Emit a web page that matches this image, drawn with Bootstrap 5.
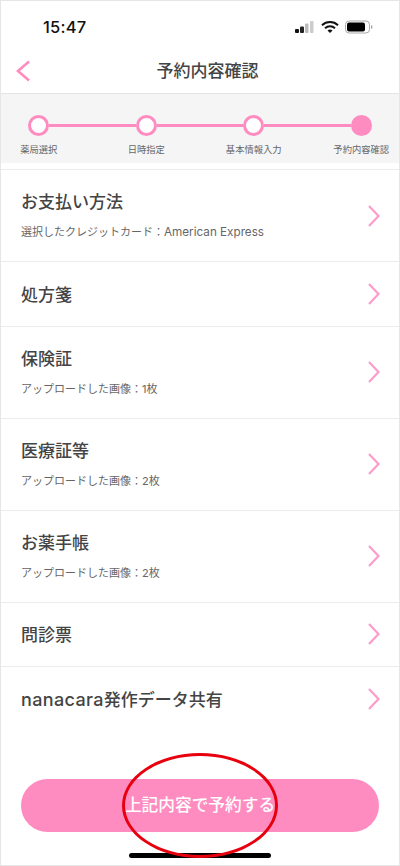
<!DOCTYPE html>
<html lang="ja">
<head>
<meta charset="utf-8">
<meta name="viewport" content="width=device-width, initial-scale=1">
<link href="https://cdn.jsdelivr.net/npm/bootstrap@5.3.0/dist/css/bootstrap.min.css" rel="stylesheet">
<style>
html,body{margin:0;background:#fff}
body{font-family:"Inter","Noto Sans CJK JP",sans-serif;color:#444}
.screen{width:400px;height:866px;border:1px solid #e6e6e6;overflow:hidden;position:relative}
.statusbar{height:49px;padding:0 0 0 42px}
.clock{font-family:"Inter",sans-serif;font-size:16.5px;font-weight:500;color:#111;letter-spacing:.2px;padding-top:16px;line-height:20px}
.status-icons{margin-left:auto;padding:19px 0 0 0;margin-right:26px;gap:6px}
.topbar{height:44px;border-bottom:1px solid #e3e3e3;position:relative}
.topbar-title{font-size:17px;font-weight:500;color:#444;line-height:24px;margin-top:-2px;margin-left:15px}
.back{position:absolute;left:15px;top:10px}
.stepper{height:69px;background:#f5f5f5;padding-top:21px;overflow:hidden}
.dots{padding:0 27px}
.dot{width:21px;height:21px;border-radius:50%;border:3px solid #ff8cc0;background:#fff;flex:none}
.dot-on{background:#ff8cc0}
.link{height:3.500px;background:#ff8cc0;flex:1 1 auto}
.labels{display:grid;grid-template-columns:repeat(4,107.500px);margin-left:-16px;margin-top:7px}
.lab{font-size:9.300px;line-height:14px;color:#666;text-align:center;white-space:nowrap}
.menu{margin-top:6px;border-top:1px solid #ececec}
.entry{display:flex;align-items:center;justify-content:space-between;padding:0 19px 0 20px;border:0;border-bottom:1px solid #ececec;border-radius:0;background:#fff}
.entry-lg{height:92px}
.entry-sm{height:64.500px}
.entry-title{font-size:17px;font-weight:500;color:#444;line-height:24px}
.entry-sm .entry-title{padding-top:2px}
.entry-title-en{font-size:18px;letter-spacing:.35px}
.entry-sub{font-size:11px;color:#666;line-height:16px;margin-top:10px;margin-bottom:1px}
.entry-sub-en{font-size:11.700px}
.cta-wrap{padding:47.500px 20px 0}
.cta{display:block;width:100%;height:53px;border:0;border-radius:27px;background:#ff8cc0;color:#fff;font-size:16.700px;font-weight:500;line-height:53px;padding:0}
.home{position:absolute;left:128px;bottom:7px;width:142px;height:5px;border-radius:3px;background:#000}
.circle-mark{position:absolute;left:121px;top:752px;width:156px;height:105px;border:3px solid #e8000f;border-radius:50%;pointer-events:none}
</style>
</head>
<body>
<div class="screen">
  <div class="statusbar d-flex">
    <div class="clock">15:47</div>
    <div class="status-icons d-flex align-items-start">
      <svg width="20" height="14" viewBox="0 0 20 14"><rect x="0" y="9" width="4" height="4" rx="1" fill="#111"/><rect x="5" y="6.500" width="4" height="6.500" rx="1" fill="#222"/><rect x="10" y="3.500" width="3.500" height="9.500" rx="1" fill="#bbb"/><rect x="15" y="1" width="3.500" height="12" rx="1" fill="#ccc"/></svg>
      <svg width="18" height="14" viewBox="0 0 18 14" fill="none" stroke="#111" stroke-width="2"><path d="M1 5.200C5.500 1 12.500 1 17 5.200"/><path d="M4 8.200C6.800 5.700 11.200 5.700 14 8.200"/><path d="M9 13L6.500 10.500C8 9.300 10 9.300 11.500 10.500Z" fill="#111" stroke="none"/></svg>
      <svg width="28" height="14" viewBox="0 0 28 14"><rect x=".5" y="1" width="24" height="12" rx="3.500" fill="#fff" stroke="#aaa"/><rect x="2" y="2.500" width="18" height="9" rx="2" fill="#000"/><path d="M26 5v4c1-.4 1.500-1.200 1.500-2s-.5-1.600-1.500-2z" fill="#aaa"/></svg>
    </div>
  </div>
  <div class="topbar d-flex align-items-center justify-content-center">
    <svg class="back" width="16" height="22" viewBox="0 0 16 22" fill="none" stroke="#ff8cc0" stroke-width="2.600"><path d="M13 1.500L2 11l11 9.500"/></svg>
    <div class="topbar-title">予約内容確認</div>
  </div>
  <div class="stepper">
    <div class="dots d-flex align-items-center">
      <span class="dot"></span><span class="link"></span>
      <span class="dot"></span><span class="link"></span>
      <span class="dot"></span><span class="link"></span>
      <span class="dot dot-on"></span>
    </div>
    <div class="labels">
      <div class="lab">薬局選択</div>
      <div class="lab">日時指定</div>
      <div class="lab">基本情報入力</div>
      <div class="lab">予約内容確認</div>
    </div>
  </div>
  <div class="menu list-group list-group-flush">
    <a class="entry entry-lg list-group-item text-decoration-none">
      <div><div class="entry-title">お支払い方法</div><div class="entry-sub">選択したクレジットカード：<span class="entry-sub-en">American Express</span></div></div>
      <svg width="12" height="22" viewBox="0 0 12 22" fill="none" stroke="#fb9ccb" stroke-width="2.200"><path d="M1 1l9.500 10L1 21"/></svg>
    </a>
    <a class="entry entry-sm list-group-item text-decoration-none">
      <div class="entry-title">処方箋</div>
      <svg width="12" height="22" viewBox="0 0 12 22" fill="none" stroke="#fb9ccb" stroke-width="2.200"><path d="M1 1l9.500 10L1 21"/></svg>
    </a>
    <a class="entry entry-lg list-group-item text-decoration-none">
      <div><div class="entry-title">保険証</div><div class="entry-sub">アップロードした画像：1枚</div></div>
      <svg width="12" height="22" viewBox="0 0 12 22" fill="none" stroke="#fb9ccb" stroke-width="2.200"><path d="M1 1l9.500 10L1 21"/></svg>
    </a>
    <a class="entry entry-lg list-group-item text-decoration-none">
      <div><div class="entry-title">医療証等</div><div class="entry-sub">アップロードした画像：2枚</div></div>
      <svg width="12" height="22" viewBox="0 0 12 22" fill="none" stroke="#fb9ccb" stroke-width="2.200"><path d="M1 1l9.500 10L1 21"/></svg>
    </a>
    <a class="entry entry-lg list-group-item text-decoration-none">
      <div><div class="entry-title">お薬手帳</div><div class="entry-sub">アップロードした画像：2枚</div></div>
      <svg width="12" height="22" viewBox="0 0 12 22" fill="none" stroke="#fb9ccb" stroke-width="2.200"><path d="M1 1l9.500 10L1 21"/></svg>
    </a>
    <a class="entry entry-sm list-group-item text-decoration-none">
      <div class="entry-title">問診票</div>
      <svg width="12" height="22" viewBox="0 0 12 22" fill="none" stroke="#fb9ccb" stroke-width="2.200"><path d="M1 1l9.500 10L1 21"/></svg>
    </a>
    <a class="entry entry-sm list-group-item text-decoration-none">
      <div class="entry-title"><span class="entry-title-en">nanacara</span>発作データ共有</div>
      <svg width="12" height="22" viewBox="0 0 12 22" fill="none" stroke="#fb9ccb" stroke-width="2.200"><path d="M1 1l9.500 10L1 21"/></svg>
    </a>
  </div>
  <div class="cta-wrap"><button class="cta btn" type="button">上記内容で予約する</button></div>
  <div class="home"></div>
  <div class="circle-mark"></div>
</div>
<script src="https://cdn.jsdelivr.net/npm/bootstrap@5.3.0/dist/js/bootstrap.bundle.min.js"></script>
</body>
</html>
